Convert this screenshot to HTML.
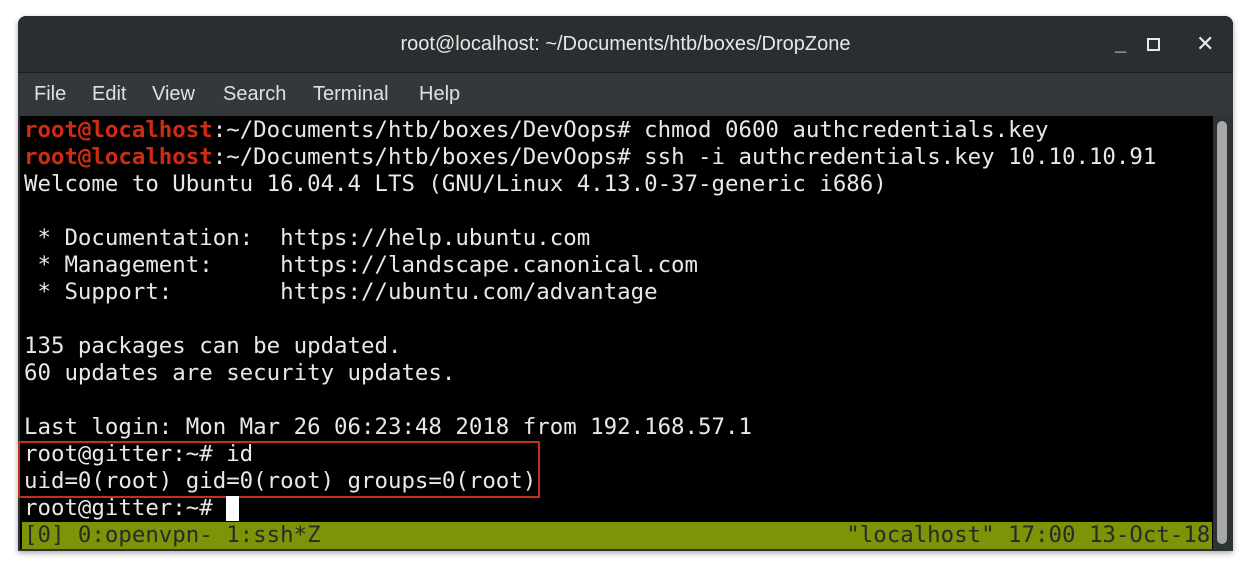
<!DOCTYPE html>
<html><head><style>
body{margin:0;width:1254px;height:572px;background:#fff;overflow:hidden;position:relative}
.win{position:absolute;left:18px;top:16px;width:1215px;height:535px;background:#2e3436;border-radius:8px 8px 0 0;box-shadow:0 2px 6px rgba(0,0,0,.35)}
.title{position:absolute;left:0;top:0;width:100%;height:56px;background:#2b2e30;border-radius:8px 8px 0 0;border-bottom:1px solid #1c1f20;color:#e6e6e6;font:20px "Liberation Sans",sans-serif;text-align:center;line-height:56px}
.menu{position:absolute;left:0;top:57px;width:100%;height:43px;background:#33393b;color:#e0e0e0;font:20px "Liberation Sans",sans-serif;line-height:43px}
.menu span{position:absolute;top:0}
.term{position:absolute;left:2px;top:100px;width:1193px;height:433px;background:#000}
.sb{position:absolute;left:1195px;top:100px;width:18px;height:433px;background:#2e3436}
.sb div{position:absolute;left:4px;top:5px;width:10px;height:423px;background:#a8a8a8;border-radius:5px}
pre{margin:0;position:absolute;left:4px;top:1px;font:22.4px "DejaVu Sans Mono",monospace;line-height:27px;color:#e8e8e8}
.r{color:#d02c12;font-weight:bold}
.status{position:absolute;left:2px;top:406px;width:1190px;height:27px;background:#7f9306;font:22.4px "DejaVu Sans Mono",monospace;line-height:27px;color:#2a2a2a}
.box{position:absolute;left:18px;top:441px;width:518px;height:53px;border:2px solid #c0321c}
.cur{position:absolute;left:226px;top:496px;width:13px;height:25px;background:#fff}
.ctl{position:absolute;top:0;color:#e8e8e8;font:bold 20px "Liberation Sans",sans-serif;line-height:56px}
</style></head><body>
<div class="win">
<div class="title">root@localhost: ~/Documents/htb/boxes/DropZone</div>
<div class="ctl" style="left:1097px">_</div>
<div style="position:absolute;left:1129px;top:22px;width:9px;height:9px;border:2px solid #e8e8e8"></div>
<div class="ctl" style="left:1178px;font-weight:normal;font-size:22px">✕</div>
<div class="menu"><span style="left:16px">File</span><span style="left:74px">Edit</span><span style="left:134px">View</span><span style="left:205px">Search</span><span style="left:295px">Terminal</span><span style="left:401px">Help</span></div>
<div class="term"><pre><span class="r">root@localhost</span>:~/Documents/htb/boxes/DevOops# chmod 0600 authcredentials.key
<span class="r">root@localhost</span>:~/Documents/htb/boxes/DevOops# ssh -i authcredentials.key 10.10.10.91
Welcome to Ubuntu 16.04.4 LTS (GNU/Linux 4.13.0-37-generic i686)

 * Documentation:  https://help.ubuntu.com
 * Management:     https://landscape.canonical.com
 * Support:        https://ubuntu.com/advantage

135 packages can be updated.
60 updates are security updates.

Last login: Mon Mar 26 06:23:48 2018 from 192.168.57.1
root@gitter:~# id
uid=0(root) gid=0(root) groups=0(root)
root@gitter:~# </pre>
<div class="status"><pre style="color:#2a2a2a;top:0;left:2px">[0] 0:openvpn- 1:ssh*Z                                       "localhost" 17:00 13-Oct-18</pre></div>
</div>
<div class="sb"><div></div></div>
</div>
<div class="box"></div>
<div class="cur"></div>
</body></html>
